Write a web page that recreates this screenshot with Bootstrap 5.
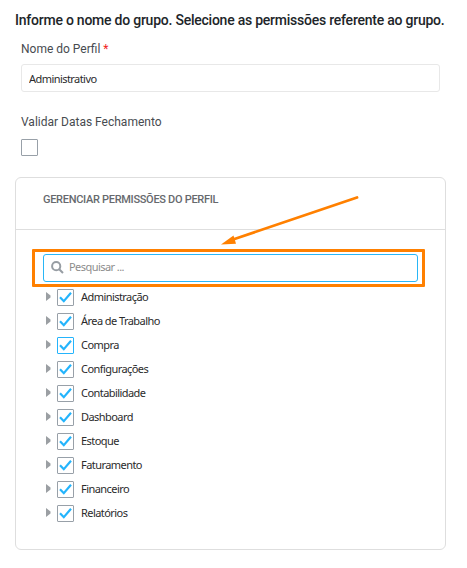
<!DOCTYPE html>
<html lang="pt-BR">
<head>
<meta charset="utf-8">
<meta name="viewport" content="width=device-width, initial-scale=1">
<title>Perfil</title>
<link rel="stylesheet" href="https://cdn.jsdelivr.net/npm/bootstrap@5.3.0/dist/css/bootstrap.min.css">
<style>
body{font-family:Roboto,sans-serif;color:#212529;width:467px;height:568px;overflow:hidden;background:#fff}
.page{padding:10px 21px 0 15px}
.title{font-size:14px;line-height:20px;font-weight:500;letter-spacing:-.235px;white-space:nowrap}
.field{padding:0 6px}
.field-label{font-size:12px;line-height:16px;color:#474b50;letter-spacing:0}
.field-label.first{margin-top:11px}
.field-label.second{margin-top:22px;margin-bottom:9px}
.star{color:#f01d1d}
.ui-text,.form-control.ui-text{font-family:"Noto Sans",sans-serif;font-size:11px;line-height:16px;color:#2b2b2b;letter-spacing:-.56px}
.form-control.ui-text{height:28px;border:1px solid #e8e8e8;border-radius:3px;padding:0 7px;margin-top:7px;box-shadow:none}
.box{width:17px;height:17px;border:1px solid #98a0a8;border-radius:1px;flex:none;display:block;background:#fff}
.box.hot{border-color:#24b4fc}
.panel{border:1px solid #dedede;border-radius:6px;height:373px;margin-top:21px}
.panel .card-header{height:52px;background:none;border-bottom:1px solid #dedede;padding:0 27px 6px;font-size:11px;font-weight:500;color:#66696d;letter-spacing:-.3px}
.panel .card-body{padding:19px 20px 0 16px}
.highlight{border:3px solid #ff8000;height:38px;padding:2px 4px 0 8px;border-radius:1px}
.search{height:28px;border:1px solid #29b6f6;border-radius:3px;padding:0 0 2px 7px}
.search .ui-text{color:#8c8c8c;margin-left:5px}
.tree{margin:-2px 0 0 13px}
.tree li{height:24px}
.tree .caret{width:5px;height:9px;margin:0 6px 2px 1px;flex:none}
.tree .ui-text{margin-left:7px}
.arrow{position:absolute;left:215px;top:190px;pointer-events:none}
</style>
</head>
<body class="position-relative">
<main class="page">
  <h1 class="title mb-0">Informe o nome do grupo. Selecione as permissões referente ao grupo.</h1>
  <div class="field">
    <label class="field-label first d-block" for="nome">Nome do Perfil <span class="star">*</span></label>
    <input id="nome" class="form-control ui-text" value="Administrativo">
    <span class="field-label second d-block">Validar Datas Fechamento</span>
    <span class="box" role="checkbox" aria-checked="false"></span>
  </div>
  <section class="card panel">
    <div class="card-header d-flex align-items-center">GERENCIAR PERMISSÕES DO PERFIL</div>
    <div class="card-body">
      <div class="highlight">
        <div class="search d-flex align-items-center">
          <svg width="13" height="13" viewBox="0 0 13 13" fill="none" stroke="#979da3" stroke-width="2"><circle cx="5.2" cy="5.2" r="4.1"/><path d="M8.2 8.2 12 12"/></svg>
          <span class="ui-text">Pesquisar ...</span>
        </div>
      </div>
      <ul class="tree list-unstyled mb-0" id="tree"></ul>
    </div>
  </section>
</main>
<svg class="arrow" width="150" height="60" viewBox="215 190 150 60"><path d="M357 197.500 233 239.500" stroke="#ff8000" stroke-width="2.800" stroke-linecap="round"/><path d="M221 244.500 233.500 235.500 236 243.800Z" fill="#ff8000"/></svg>
<script>
document.getElementById('tree').innerHTML=['Administração','Área de Trabalho','Compra','Configurações','Contabilidade','Dashboard','Estoque','Faturamento','Financeiro','Relatórios'].map((t,i)=>
`<li class="d-flex align-items-center"><svg class="caret" viewBox="0 0 5 9"><path d="M0 0 4.500 3.500V5.500L0 9Z" fill="#9b9fa3"/></svg><span class="box ${i===2?'hot':''}"><svg class="d-block" width="15" height="15" viewBox="0 0 15 15" fill="none" stroke="#24b4fc" stroke-width="2.200"><path d="M2 7.200 5.800 11.200 13 2.800"/></svg></span><span class="ui-text">${t}</span></li>`).join('');
</script>
<script src="https://cdn.jsdelivr.net/npm/bootstrap@5.3.0/dist/js/bootstrap.bundle.min.js"></script>
</body>
</html>
